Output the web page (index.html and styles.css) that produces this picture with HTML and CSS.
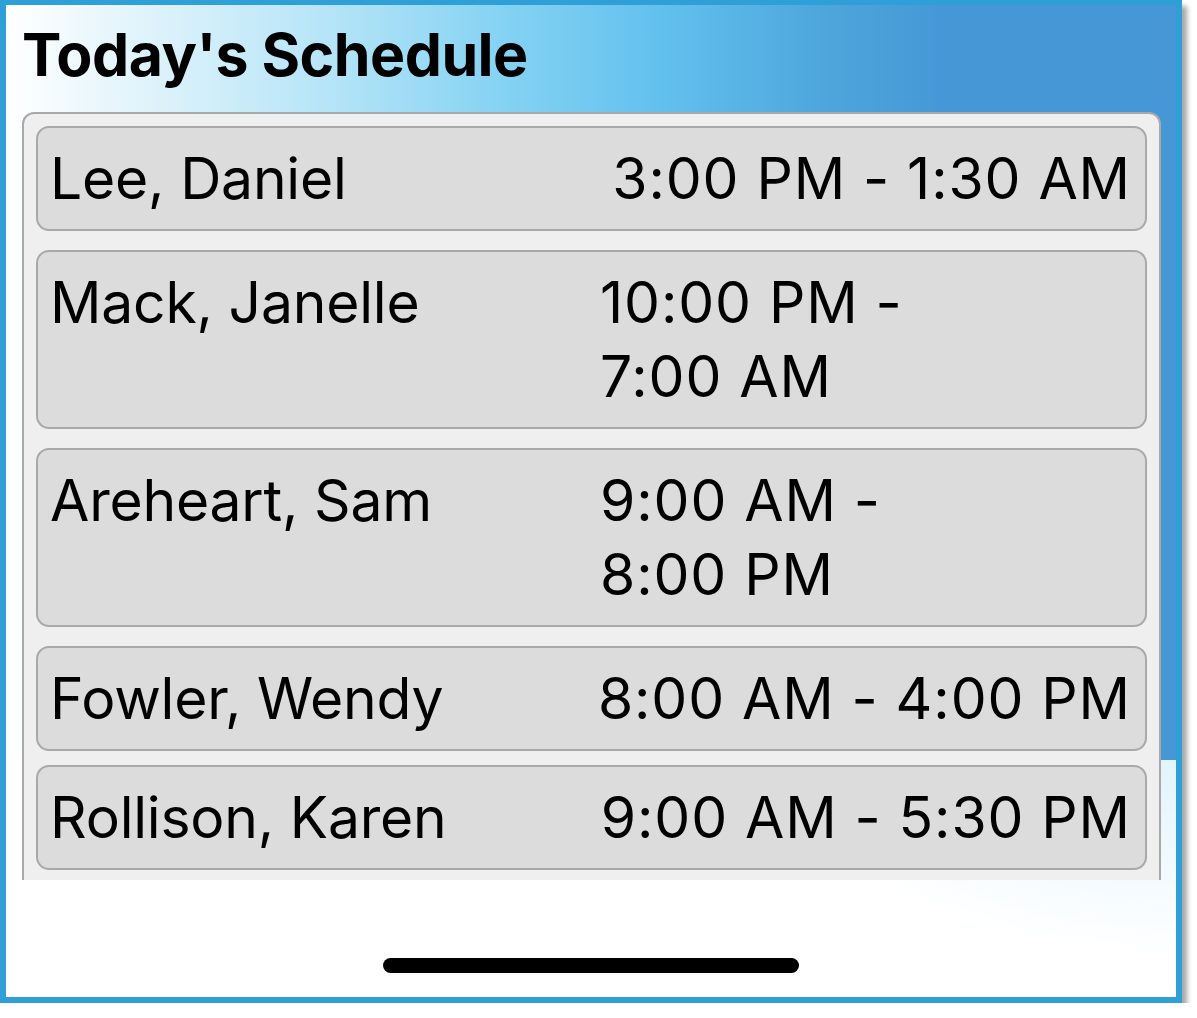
FILE: index.html
```html
<!DOCTYPE html>
<html lang="en">
<head>
<meta charset="utf-8">
<title>Today's Schedule</title>
<link rel="stylesheet" href="styles.css">
</head>
<body>
<div class="frame">
  <div class="screen">
    <h1 class="title">Today's Schedule</h1>
    <div class="list">
      <div class="row">
        <span class="name">Lee, Daniel</span>
        <span class="time">3:00 PM - 1:30 AM</span>
      </div>
      <div class="row">
        <span class="name">Mack, Janelle</span>
        <span class="time wrap">10:00 PM -<br>7:00 AM</span>
      </div>
      <div class="row">
        <span class="name">Areheart, Sam</span>
        <span class="time wrap">9:00 AM -<br>8:00 PM</span>
      </div>
      <div class="row">
        <span class="name">Fowler, Wendy</span>
        <span class="time">8:00 AM - 4:00 PM</span>
      </div>
      <div class="row row-last">
        <span class="name">Rollison, Karen</span>
        <span class="time">9:00 AM - 5:30 PM</span>
      </div>
    </div>
    <div class="home">
      <div class="home-bar"></div>
    </div>
  </div>
</div>
</body>
</html>
```
FILE: styles.css
```css
html, body {
  margin: 0;
  padding: 0;
  background: #ffffff;
}

body {
  font-family: Inter, "Noto Sans", "Liberation Sans", sans-serif;
  color: #000;
}

.frame {
  width: 1182px;
  height: 1003px;
  box-sizing: border-box;
  border: 6px solid #2f9fd8;
  border-top-width: 5px;
  box-shadow: 5px 6px 5px rgba(0, 0, 0, 0.35);
}

.screen {
  height: 100%;
  display: flex;
  flex-direction: column;
  background:
    linear-gradient(90deg, #ffffff 0%, #dff3fb 12%, #b4e4f7 28%, #86d3f3 42%, #62c0ee 56%, #4ea6dc 70%, #4598d5 80%, #4598d5 100%) top left / 100% 755px no-repeat,
    radial-gradient(ellipse 380px 190px at 100% 760px, #e2f4fc 0%, rgba(255,255,255,0) 100%) no-repeat,
    #ffffff;
}

.title {
  margin: 0;
  height: 107px;
  padding: 15px 0 0 16px;
  box-sizing: border-box;
  font-size: 59px;
  font-weight: 700;
  line-height: 70px;
  letter-spacing: -0.5px;
}

.list {
  margin: 0 15px 0 16px;
  height: 768px;
  box-sizing: border-box;
  border: 2px solid #a9a9a9;
  border-bottom: none;
  border-radius: 12px 12px 0 0;
  background: #efefef;
  padding: 12px 12px 0 12px;
  overflow: hidden;
  display: flex;
  flex-direction: column;
  gap: 19px;
}

.row {
  flex: none;
  display: flex;
  justify-content: space-between;
  align-items: flex-start;
  border: 2px solid #a9a9a9;
  border-radius: 13px;
  background: #dcdcdc;
  padding: 14px 14px 13px 12px;
  font-size: 57px;
  line-height: 74px;
  letter-spacing: -0.2px;
}

.row-last {
  margin-top: -5px;
}

.name {
  white-space: nowrap;
}

.time {
  white-space: nowrap;
  letter-spacing: 0.9px;
}

.time.wrap {
  width: 531px;
}

.home {
  flex: 1;
  display: flex;
  justify-content: center;
  align-items: flex-end;
  padding-bottom: 24px;
}

.home-bar {
  width: 416px;
  height: 15px;
  border-radius: 8px;
  background: #000;
}
```
